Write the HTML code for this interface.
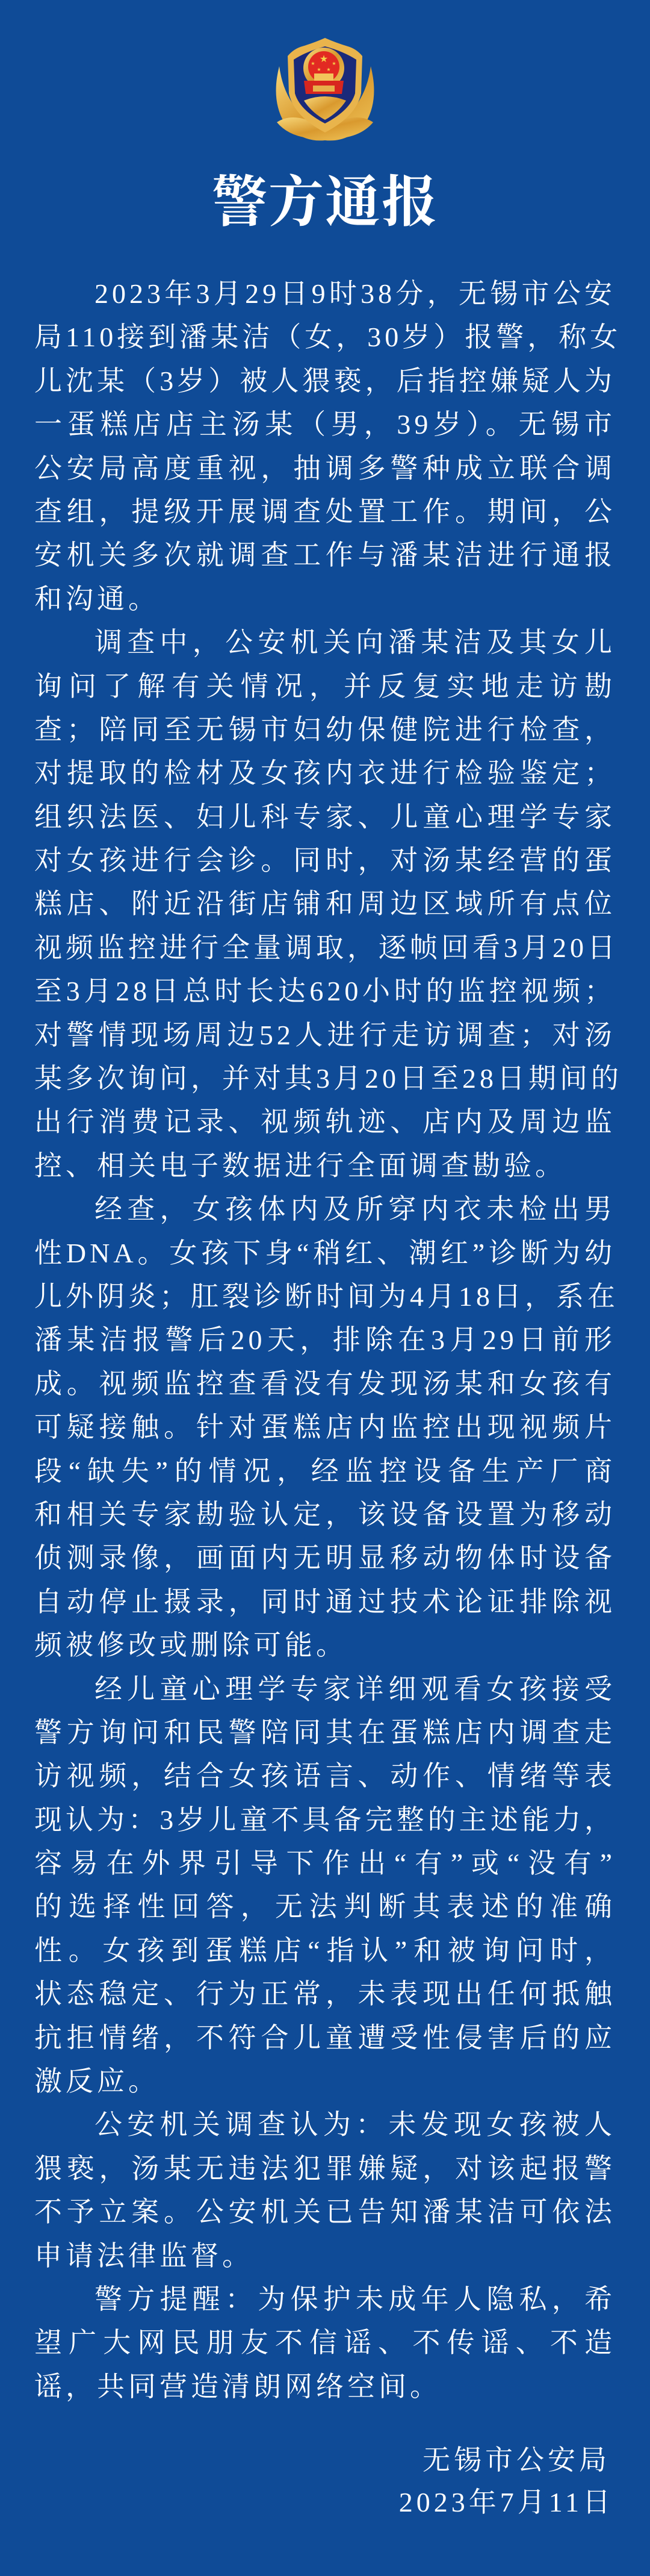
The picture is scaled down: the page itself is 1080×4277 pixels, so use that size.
<!DOCTYPE html>
<html><head><meta charset="utf-8">
<style>
html,body{margin:0;padding:0;}
body{width:1080px;height:4277px;background:#0f4b97;position:relative;overflow:hidden;
font-family:"Liberation Serif","Noto Serif CJK SC",serif;color:#fff;}
.title{position:absolute;left:0;width:1080px;top:286px;text-align:center;font-size:92px;line-height:100px;font-weight:bold;letter-spacing:2px;font-family:"Liberation Serif","Noto Serif CJK SC",serif;}
.body{position:absolute;left:57px;width:966px;top:452px;font-size:46px;line-height:72.4px;letter-spacing:6px;}
.l{height:72.4px;white-space:nowrap;text-align:justify;text-align-last:justify;}
.i{padding-left:100px;}
.e{text-align-last:left;}
.sig{position:absolute;right:66px;font-size:46px;letter-spacing:6px;line-height:72px;white-space:nowrap;}
</style></head><body>
<svg style="position:absolute;left:450px;top:55px" width="180" height="190" viewBox="0 0 180 190">
<defs>
<linearGradient id="g" x1="0" y1="0" x2="1" y2="1"><stop offset="0" stop-color="#f7d77a"/><stop offset="0.5" stop-color="#d9992e"/><stop offset="1" stop-color="#f0c55a"/></linearGradient>
</defs>
<path d="M14 55 Q0 110 22 148 Q50 182 90 178 Q130 182 158 148 Q180 110 166 55 Q160 100 135 128 L90 150 L45 128 Q20 100 14 55Z" fill="url(#g)"/>
<path d="M10 148 Q40 128 90 158 Q140 128 170 148 Q145 178 90 175 Q35 178 10 148Z" fill="url(#g)"/>
<path d="M28 38 Q38 26 52 22 Q72 16 90 8 Q108 16 128 22 Q142 26 152 38 L150 100 Q142 138 90 165 Q38 138 30 100Z" fill="#e9b44c"/>
<path d="M38 44 Q60 30 90 22 Q120 30 142 44 L140 100 Q132 128 90 150 Q48 128 40 100Z" fill="#1a2a7a"/>
<path d="M55 112 Q90 98 125 112 Q112 132 90 144 Q68 132 55 112Z" fill="url(#g)"/>
<circle cx="88" cy="58" r="34" fill="url(#g)"/>
<circle cx="88" cy="56" r="26" fill="#e22a22"/>
<text x="88" y="48" font-size="16" fill="#f6d34a" text-anchor="middle" font-family="DejaVu Sans">★</text>
<text x="70" y="53" font-size="8" fill="#f6d34a" text-anchor="middle" font-family="DejaVu Sans">★</text>
<text x="105" y="53" font-size="8" fill="#f6d34a" text-anchor="middle" font-family="DejaVu Sans">★</text>
<text x="80" y="63" font-size="8" fill="#f6d34a" text-anchor="middle" font-family="DejaVu Sans">★</text>
<text x="96" y="63" font-size="8" fill="#f6d34a" text-anchor="middle" font-family="DejaVu Sans">★</text>
<rect x="72" y="67" width="32" height="12" fill="#f2c45a"/>
<path d="M55 79 L121 79 L118 101 L58 101Z" fill="#d8261f"/>
<rect x="70" y="87" width="36" height="10" fill="#e7b04a"/>
</svg>
<div class="title">警方通报</div>
<div class="body">
<div class="l i">2023年3月29日9时38分，无锡市公安</div>
<div class="l">局110接到潘某洁（女，30岁）报警，称女</div>
<div class="l">儿沈某（3岁）被人猥亵，后指控嫌疑人为</div>
<div class="l">一蛋糕店店主汤某（男，39岁）。无锡市</div>
<div class="l">公安局高度重视，抽调多警种成立联合调</div>
<div class="l">查组，提级开展调查处置工作。期间，公</div>
<div class="l">安机关多次就调查工作与潘某洁进行通报</div>
<div class="l e">和沟通。</div>
<div class="l i">调查中，公安机关向潘某洁及其女儿</div>
<div class="l">询问了解有关情况，并反复实地走访勘</div>
<div class="l">查；陪同至无锡市妇幼保健院进行检查，</div>
<div class="l">对提取的检材及女孩内衣进行检验鉴定；</div>
<div class="l">组织法医、妇儿科专家、儿童心理学专家</div>
<div class="l">对女孩进行会诊。同时，对汤某经营的蛋</div>
<div class="l">糕店、附近沿街店铺和周边区域所有点位</div>
<div class="l">视频监控进行全量调取，逐帧回看3月20日</div>
<div class="l">至3月28日总时长达620小时的监控视频；</div>
<div class="l">对警情现场周边52人进行走访调查；对汤</div>
<div class="l">某多次询问，并对其3月20日至28日期间的</div>
<div class="l">出行消费记录、视频轨迹、店内及周边监</div>
<div class="l e">控、相关电子数据进行全面调查勘验。</div>
<div class="l i">经查，女孩体内及所穿内衣未检出男</div>
<div class="l">性DNA。女孩下身“稍红、潮红”诊断为幼</div>
<div class="l">儿外阴炎；肛裂诊断时间为4月18日，系在</div>
<div class="l">潘某洁报警后20天，排除在3月29日前形</div>
<div class="l">成。视频监控查看没有发现汤某和女孩有</div>
<div class="l">可疑接触。针对蛋糕店内监控出现视频片</div>
<div class="l">段“缺失”的情况，经监控设备生产厂商</div>
<div class="l">和相关专家勘验认定，该设备设置为移动</div>
<div class="l">侦测录像，画面内无明显移动物体时设备</div>
<div class="l">自动停止摄录，同时通过技术论证排除视</div>
<div class="l e">频被修改或删除可能。</div>
<div class="l i">经儿童心理学专家详细观看女孩接受</div>
<div class="l">警方询问和民警陪同其在蛋糕店内调查走</div>
<div class="l">访视频，结合女孩语言、动作、情绪等表</div>
<div class="l">现认为：3岁儿童不具备完整的主述能力，</div>
<div class="l">容易在外界引导下作出“有”或“没有”</div>
<div class="l">的选择性回答，无法判断其表述的准确</div>
<div class="l">性。女孩到蛋糕店“指认”和被询问时，</div>
<div class="l">状态稳定、行为正常，未表现出任何抵触</div>
<div class="l">抗拒情绪，不符合儿童遭受性侵害后的应</div>
<div class="l e">激反应。</div>
<div class="l i">公安机关调查认为：未发现女孩被人</div>
<div class="l">猥亵，汤某无违法犯罪嫌疑，对该起报警</div>
<div class="l">不予立案。公安机关已告知潘某洁可依法</div>
<div class="l e">申请法律监督。</div>
<div class="l i">警方提醒：为保护未成年人隐私，希</div>
<div class="l">望广大网民朋友不信谣、不传谣、不造</div>
<div class="l e">谣，共同营造清朗网络空间。</div>
</div>
<div class="sig" style="top:4049px;">无锡市公安局</div>
<div class="sig" style="top:4119px;right:60px;">2023年7月11日</div>
</body></html>
